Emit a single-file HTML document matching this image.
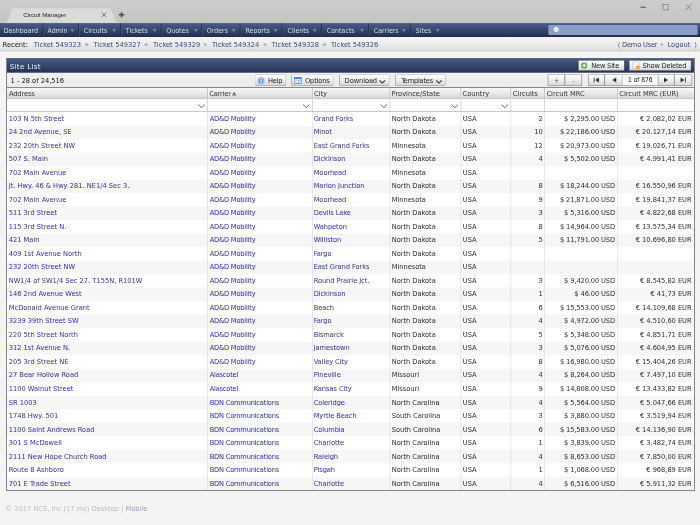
<!DOCTYPE html>
<html lang="en"><head><meta charset="utf-8"><title>Circuit Manager</title>
<style>
html,body{margin:0;padding:0}
body{width:700px;height:525px;overflow:hidden;background:#f3f3f3}
#root{position:absolute;left:0;top:0;width:1036.58px;height:777.43px;transform:scale(0.6753);transform-origin:0 0;
 font:11px "DejaVu Sans Condensed","DejaVu Sans","Liberation Sans",sans-serif;letter-spacing:0;color:#2a2a2a;background:#f4f4f4;overflow:hidden;filter:blur(0.55px)}
#root div,#root span,#root a{position:absolute;white-space:nowrap;box-sizing:border-box}
a{color:#2f2f9c;text-decoration:none}
.chrome{left:0;top:0;width:100%;height:34px;background:linear-gradient(#cdcdcd,#c5c5c4)}
.nav{left:0;top:34px;width:100%;height:21px;background:linear-gradient(#485a83 0%,#3a4b72 40%,#2a3a5e 75%,#1f2d4e 100%);border-top:1px solid #27365a}
.nav span.t{color:#d9deea;top:2.7px;line-height:14px;font-size:10.4px;letter-spacing:0}
.nav span.s{top:0;width:1px;height:100%;background:#1d2945;box-shadow:1px 0 0 #4a5c82}
.nav span.a{top:7.6px;width:0;height:0;border-left:3.2px solid transparent;border-right:3.2px solid transparent;border-top:5px solid #6f7fa2}
.search{left:811.94px;top:2.4px;width:220.94px;height:15px;background:#8b9fc6;border-radius:2px}
.rec{left:0;top:55px;width:100%;height:21px;background:linear-gradient(#f7f7f7,#ececec 50%,#dedede);border-bottom:1px solid #a9a9a9;box-shadow:0 1px 0 #fff}
.rec span,.rec a{top:4.4px;line-height:14px}
.rec a{color:#3a4a7c}
.rec .d{top:9.2px !important;width:4.2px;height:4.2px;border-radius:2.1px;background:#b3b3ba}
.panel{left:8.88px;top:86.33px;width:1020.29px;height:640.75px;background:#fff}
.bd{background:#787878}
.ph{left:8.88px;top:86.33px;width:1020.29px;height:21.47px;background:linear-gradient(#4a5b84,#36476d 50%,#243458);border:1px solid #223052}
.ph .title{left:4.4px;top:3.4px;font:10.7px/16px 'DejaVu Sans',sans-serif;color:#eef1f7;letter-spacing:0.42px}
.btn{border:1px solid #8e8e8e;border-top-color:#b2b2b2;border-radius:2px;background:linear-gradient(#ffffff,#f0f0f0 45%,#d8d8d8);color:#222;line-height:14px;height:16.6px}
.btn span{top:0.4px}
.tb .btn span{top:1.5px}
.tb{left:10.36px;top:107.8px;width:1017.33px;height:21.03px;background:linear-gradient(#f2f2f2,#ebebeb)}
.ch{left:10.36px;top:128.83px;width:1017.33px;height:18.22px;background:linear-gradient(#fafafa,#ececec 45%,#d6d6d6);border-bottom:1px solid #a0a0a0;color:#333}
.ch span.h{top:3.1px;line-height:14px}
.ch span.v{top:0;width:1px;height:100%;background:#b4b4b4;box-shadow:1px 0 0 #fbfbfb}
.fr{left:10.36px;top:147.05px;width:1017.33px;height:18.58px;background:#fff;border-bottom:1.3px solid #a2a2a2}
.fr span.v{top:0;width:1px;height:100%;background:#c4c4c4}
.fr svg{position:absolute;top:5px}
.rows{left:10.36px;top:165.63px;width:1017.33px;height:560.0px;background:#fff}
.r{left:0;width:100%;height:20.0px}
.r.o{background:#f6f6f6}
.r span,.r a{top:3.4px;line-height:14px}
.r .n{text-align:right}
.c1{letter-spacing:-0.3px}.c2{letter-spacing:-0.12px}.c3{letter-spacing:-0.07px}.c6{letter-spacing:-0.18px}.c7{letter-spacing:-0.05px}
.vl{top:0;width:1px;height:100%;background:#dcdcdc}
.foot{left:8.0px;top:746.94px;line-height:14px;color:#bcbcbc}
.foot a{position:static !important;color:#93a0cf}
</style></head>
<body><div id="root">
<div class="chrome">
<svg style="position:absolute;left:0;top:0" width="300" height="34" viewBox="0 0 300 34"><path d="M3 34 C10 33 11 31 13 25 L16 16 C17 13 19 12 22 12 L160 12 C163 12 165 13 166 16 L170 27 C171 31 173 33 179 34 Z" fill="#dbdbdb"/><path d="M3 33.5 C10 33 11 31 13 25 L16 16 C17 13 19 12 22 12 L160 12 C163 12 165 13 166 16 L170 27 C171 31 173 33 179 33.5" fill="none" stroke="#c4c4c4" stroke-width="0.6"/></svg>
<span style="left:34.5px;top:16.4px;font:9px 'Liberation Sans',sans-serif;letter-spacing:0;line-height:12px;color:#1e1e1e">Circuit Manager</span>
<svg style="position:absolute;left:149.45px;top:16.92px" width="10" height="10" viewBox="0 0 10 10"><path d="M1.5 1.5 L8.5 8.5 M8.5 1.5 L1.5 8.5" stroke="#5a5a5a" stroke-width="1.2" fill="none"/></svg>
<svg style="position:absolute;left:175.36px;top:16.92px" width="10" height="10" viewBox="0 0 10 10"><path d="M5 1 V9 M1 5 H9" stroke="#484848" stroke-width="2.2" fill="none"/></svg>
<svg style="position:absolute;left:941.8px;top:1.8px" width="94.77" height="16" viewBox="0 0 94.77 16"><path d="M6.5 8.8 H14.5" stroke="#555" stroke-width="1.6"/><g stroke="#4e4e4e" stroke-width="1.1" fill="none"><rect x="39.83" y="4.6" width="8" height="8" stroke-dasharray="2 1.4"/><path d="M73.75 4.6 l8 8 m0 -8 l-8 8" stroke-dasharray="2.2 1.2"/></g></svg>
</div>
<div class="nav">
<span class="t" style="left:5.55px">Dashboard</span>
<span class="s" style="left:62.92px"></span>
<span class="t" style="left:70.34px">Admin</span>
<span class="a" style="left:104.06px"></span>
<span class="s" style="left:116.23px"></span>
<span class="t" style="left:124.09px">Circuits</span>
<span class="a" style="left:165.52px"></span>
<span class="s" style="left:177.98000000000002px"></span>
<span class="t" style="left:186.29px">Tickets</span>
<span class="a" style="left:225.79px"></span>
<span class="s" style="left:237.95000000000002px"></span>
<span class="t" style="left:246.26px">Quotes</span>
<span class="a" style="left:286.5px"></span>
<span class="s" style="left:297.93px"></span>
<span class="t" style="left:306.23px">Orders</span>
<span class="a" style="left:343.22px"></span>
<span class="s" style="left:355.38px"></span>
<span class="t" style="left:363.54px">Reports</span>
<span class="a" style="left:404.97px"></span>
<span class="s" style="left:417.13px"></span>
<span class="t" style="left:425.74px">Clients</span>
<span class="a" style="left:463.46px"></span>
<span class="s" style="left:475.33px"></span>
<span class="t" style="left:483.93px">Contacts</span>
<span class="a" style="left:532.76px"></span>
<span class="s" style="left:544.93px"></span>
<span class="t" style="left:553.53px">Carriers</span>
<span class="a" style="left:594.51px"></span>
<span class="s" style="left:607.12px"></span>
<span class="t" style="left:615.73px">Sites</span>
<span class="a" style="left:644.56px"></span>
<div class="search"><svg style="position:absolute;left:7px;top:1.4px" width="12.6" height="11.7" viewBox="0 0 14 13"><circle cx="5.2" cy="5.2" r="3.6" fill="#dfe9f8" stroke="#f4f7fc" stroke-width="1.4"/><path d="M8 8 L11.5 11.5" stroke="#c9a77a" stroke-width="2" stroke-linecap="round"/></svg></div>
</div>
<div class="rec">
<span style="left:3.85px;color:#222">Recent:</span>
<a style="left:49.98px">Ticket 549323</a>
<a style="left:138.46px">Ticket 549327</a>
<a style="left:226.57px">Ticket 549329</a>
<a style="left:313.93px">Ticket 549324</a>
<a style="left:402.41px">Ticket 549328</a>
<a style="left:490.15px">Ticket 549326</a>
<span class="d" style="left:126.36000000000001px"></span>
<span class="d" style="left:214.47px"></span>
<span class="d" style="left:302.21px"></span>
<span class="d" style="left:390.32px"></span>
<span class="d" style="left:478.42999999999995px"></span>
<span style="left:914.85px;color:#666">(</span><a style="left:921.07px;letter-spacing:-0.3px">Demo User</a><span class="d" style="left:978.2099999999999px"></span><a style="left:988.45px">Logout</a><span style="left:1028.14px;color:#666">)</span>
</div>
<div class="panel"></div>
<svg style="position:absolute;left:0;top:0;z-index:5;pointer-events:none" width="1036.58" height="777.43" viewBox="0 0 1036.58 777.43"><rect x="8.88" y="86.33" width="1.48" height="640.75" fill="#848484"/><rect x="1027.69" y="86.33" width="1.48" height="640.75" fill="#848484"/><rect x="8.88" y="725.6" width="1020.29" height="1.48" fill="#848484"/><rect x="8.88" y="128.83" width="1020.29" height="1.48" fill="#888888"/></svg>
<div class="ph"><span class="title">Site List</span>
<div class="btn" style="left:846.04px;top:1.3px;width:69.59px"><svg style="position:absolute;left:3.4px;top:2.6px" width="10" height="10" viewBox="0 0 12 12"><circle cx="6" cy="6" r="5.3" fill="#5cb848" stroke="#3f9a30" stroke-width="0.8"/><path d="M6 2.8 V9.2 M2.8 6 H9.2" stroke="#fff" stroke-width="2.2"/></svg><span style="left:18.6px;letter-spacing:-0.3px">New Site</span></div>
<div class="btn" style="left:921.41px;top:1.3px;width:93.0px"><svg style="position:absolute;left:3.6px;top:1.6px" width="12" height="12" viewBox="0 0 13 13"><path d="M1.5 0.7 H8 L10.5 3.2 V12 H1.5 Z" fill="#fff" stroke="#9aa0a8" stroke-width="0.9"/><circle cx="9.3" cy="9.6" r="3" fill="#f0862a"/><path d="M7.8 9.6 H10.8" stroke="#fff" stroke-width="1.1"/></svg><span style="left:19.2px;letter-spacing:-0.32px">Show Deleted</span></div>
</div>
<div class="tb">
<span style="left:5.34px;top:5px;line-height:14px;color:#111">1 - 28 of 24,516</span>
<div class="btn" style="left:366.21px;top:2.7px;width:47.69px"><svg style="position:absolute;left:3.4px;top:2.2px" width="11.4" height="11.4" viewBox="0 0 12 12"><circle cx="6" cy="6" r="5.5" fill="#a6c3ee" stroke="#8fb0e4" stroke-width="0.7"/><circle cx="6" cy="6" r="3.3" fill="#5b87d3"/><circle cx="6" cy="5.2" r="1.5" fill="#e8f0fc"/><rect x="5.3" y="5.5" width="1.4" height="3.4" fill="#e8f0fc"/></svg><span style="left:19.4px;letter-spacing:-0.4px">Help</span></div>
<div class="btn" style="left:420.86px;top:2.7px;width:63.23px"><svg style="position:absolute;left:2.6px;top:2.6px" width="12" height="10.6" viewBox="0 0 13 11"><rect x="0.6" y="0.6" width="11.8" height="9.8" fill="#f4f8fe" stroke="#4a7bd0" stroke-width="1.2"/><rect x="0.6" y="0.6" width="11.8" height="2.6" fill="#4a7bd0"/><rect x="1.6" y="4" width="3.2" height="5.6" fill="#c9d9f2"/><path d="M6 5.4 H11 M6 7.8 H11" stroke="#6f98dc" stroke-width="1.1"/></svg><span style="left:19.4px;letter-spacing:-0.25px">Options</span></div>
<div class="btn" style="left:491.94px;top:2.7px;width:74.48px"><span style="left:7px;letter-spacing:-0.15px">Download</span><svg style="position:absolute;right:4.6px;top:6.8px" width="10" height="6.6" viewBox="0 0 9 6"><path d="M0.8 0.8 L4.5 4.6 L8.2 0.8" fill="none" stroke="#2a2a2a" stroke-width="1.4"/></svg></div>
<div class="btn" style="left:574.71px;top:2.7px;width:75.38px"><span style="left:8px;letter-spacing:-0.35px">Templates</span><svg style="position:absolute;right:4.6px;top:6.8px" width="10" height="6.6" viewBox="0 0 9 6"><path d="M0.8 0.8 L4.5 4.6 L8.2 0.8" fill="none" stroke="#2a2a2a" stroke-width="1.4"/></svg></div>
<div class="btn" style="left:800.98px;top:2.7px;width:25.73px;border-radius:0;"><span style="left:0;width:100%;text-align:center;color:#555;font-size:10px">+</span></div>
<div class="btn" style="left:825.71px;top:2.7px;width:26.32px;border-radius:0;"><span style="left:0;width:100%;text-align:center;color:#555;font-size:10px">-</span></div>
<div class="btn" style="left:860.81px;top:2.7px;width:25.28px;border-radius:0;"><svg style="position:absolute;left:50%;top:50%;margin:-5.2px 0 0 -5.4px" width="10.8" height="9" viewBox="0 0 12 10"><path d="M2 1 V9" stroke="#333" stroke-width="1.4"/><path d="M10 1 L3.6 5 L10 9 Z" fill="#333"/></svg></div>
<div class="btn" style="left:885.09px;top:2.7px;width:26.92px;border-radius:0;"><svg style="position:absolute;left:50%;top:50%;margin:-5.2px 0 0 -5.4px" width="10.8" height="9" viewBox="0 0 12 10"><path d="M9.5 1 L2.8 5 L9.5 9 Z" fill="#333"/></svg></div>
<div style="left:912.01px;top:2.7px;width:51.72px;height:16.6px;background:#fff;border-top:1px solid #b2b2b2;border-bottom:1px solid #8e8e8e;text-align:center;line-height:15.6px;font-size:10px;letter-spacing:-0.1px;color:#111">1 of 876</div>
<div class="btn" style="left:963.73px;top:2.7px;width:25.13px;border-radius:0;"><svg style="position:absolute;left:50%;top:50%;margin:-5.2px 0 0 -5.4px" width="10.8" height="9" viewBox="0 0 12 10"><path d="M2.5 1 L9.2 5 L2.5 9 Z" fill="#333"/></svg></div>
<div class="btn" style="left:987.86px;top:2.7px;width:26.47px;border-radius:0;"><svg style="position:absolute;left:50%;top:50%;margin:-5.2px 0 0 -5.4px" width="10.8" height="9" viewBox="0 0 12 10"><path d="M10 1 V9" stroke="#333" stroke-width="1.4"/><path d="M2 1 L8.4 5 L2 9 Z" fill="#333"/></svg></div>
</div>
<div class="ch">
<span class="h" style="left:2.92px;letter-spacing:-0.2px">Address</span>
<span class="h" style="left:299.67px;letter-spacing:-0.3px">Carrier<svg style="position:relative;margin-left:1.6px;top:0.4px" width="7.6" height="7" viewBox="0 0 7 7"><path d="M0.2 6.6 L3.5 0.4 L6.8 6.6 Z" fill="#707070"/></svg></span>
<span class="v" style="left:296.47px"></span>
<span class="h" style="left:454.56px;letter-spacing:0">City</span>
<span class="v" style="left:451.36px"></span>
<span class="h" style="left:569.47px;letter-spacing:0">Province/State</span>
<span class="v" style="left:566.27px"></span>
<span class="h" style="left:674.61px;letter-spacing:0">Country</span>
<span class="v" style="left:671.41px"></span>
<span class="h" style="left:749.1px;letter-spacing:0">Circuits</span>
<span class="v" style="left:745.9px"></span>
<span class="h" style="left:798.85px;letter-spacing:0">Circuit MRC</span>
<span class="v" style="left:795.65px"></span>
<span class="h" style="left:906.66px;letter-spacing:0">Circuit MRC (EUR)</span>
<span class="v" style="left:903.46px"></span>
</div>
<div class="fr">
<svg style="left:282.67px;top:6.6px" width="11" height="7" viewBox="0 0 11 7"><path d="M0.8 0.8 L5.5 5.4 L10.2 0.8" fill="none" stroke="#4a4a4a" stroke-width="1.3"/></svg>
<span class="v" style="left:296.47px"></span>
<svg style="left:437.56px;top:6.6px" width="11" height="7" viewBox="0 0 11 7"><path d="M0.8 0.8 L5.5 5.4 L10.2 0.8" fill="none" stroke="#4a4a4a" stroke-width="1.3"/></svg>
<span class="v" style="left:451.36px"></span>
<svg style="left:552.47px;top:6.6px" width="11" height="7" viewBox="0 0 11 7"><path d="M0.8 0.8 L5.5 5.4 L10.2 0.8" fill="none" stroke="#4a4a4a" stroke-width="1.3"/></svg>
<span class="v" style="left:566.27px"></span>
<svg style="left:657.61px;top:6.6px" width="11" height="7" viewBox="0 0 11 7"><path d="M0.8 0.8 L5.5 5.4 L10.2 0.8" fill="none" stroke="#4a4a4a" stroke-width="1.3"/></svg>
<span class="v" style="left:671.41px"></span>
<svg style="left:732.1px;top:6.6px" width="11" height="7" viewBox="0 0 11 7"><path d="M0.8 0.8 L5.5 5.4 L10.2 0.8" fill="none" stroke="#4a4a4a" stroke-width="1.3"/></svg>
<span class="v" style="left:745.9px"></span>
<span class="v" style="left:795.65px"></span>
<span class="v" style="left:903.46px"></span>
</div>
<div class="rows">
<div class="r" style="top:0.0px"><a style="left:2.52px">103 N 5th Street</a><a class="c1" style="left:300.07px">AD&amp;D Mobility</a><a class="c2" style="left:454.16px">Grand Forks</a><span class="c3" style="left:569.87px">North Dakota</span><span style="left:675.01px">USA</span><span class="n" style="right:223.88px">2</span><span class="n c6" style="right:117.07px">$ 2,295.00 USD</span><span class="n c7" style="right:3.6px">€ 2.082,02 EUR</span></div>
<div class="r o" style="top:20.0px"><a style="left:2.52px">24 2nd Avenue, SE</a><a class="c1" style="left:300.07px">AD&amp;D Mobility</a><a class="c2" style="left:454.16px">Minot</a><span class="c3" style="left:569.87px">North Dakota</span><span style="left:675.01px">USA</span><span class="n" style="right:223.88px">10</span><span class="n c6" style="right:117.07px">$ 22,186.00 USD</span><span class="n c7" style="right:3.6px">€ 20.127,14 EUR</span></div>
<div class="r" style="top:40.0px"><a style="left:2.52px">232 20th Street NW</a><a class="c1" style="left:300.07px">AD&amp;D Mobility</a><a class="c2" style="left:454.16px">East Grand Forks</a><span class="c3" style="left:569.87px">Minnesota</span><span style="left:675.01px">USA</span><span class="n" style="right:223.88px">12</span><span class="n c6" style="right:117.07px">$ 20,973.00 USD</span><span class="n c7" style="right:3.6px">€ 19.026,71 EUR</span></div>
<div class="r o" style="top:60.0px"><a style="left:2.52px">507 S. Main</a><a class="c1" style="left:300.07px">AD&amp;D Mobility</a><a class="c2" style="left:454.16px">Dickinson</a><span class="c3" style="left:569.87px">North Dakota</span><span style="left:675.01px">USA</span><span class="n" style="right:223.88px">4</span><span class="n c6" style="right:117.07px">$ 5,502.00 USD</span><span class="n c7" style="right:3.6px">€ 4.991,41 EUR</span></div>
<div class="r" style="top:80.0px"><a style="left:2.52px">702 Main Avenue</a><a class="c1" style="left:300.07px">AD&amp;D Mobility</a><a class="c2" style="left:454.16px">Moorhead</a><span class="c3" style="left:569.87px">Minnesota</span><span style="left:675.01px">USA</span></div>
<div class="r o" style="top:100.0px"><a style="left:2.52px">Jt. Hwy. 46 &amp; Hwy 281. NE1/4 Sec 3.</a><a class="c1" style="left:300.07px">AD&amp;D Mobility</a><a class="c2" style="left:454.16px">Marion Junction</a><span class="c3" style="left:569.87px">North Dakota</span><span style="left:675.01px">USA</span><span class="n" style="right:223.88px">8</span><span class="n c6" style="right:117.07px">$ 18,244.00 USD</span><span class="n c7" style="right:3.6px">€ 16.550,96 EUR</span></div>
<div class="r" style="top:120.0px"><a style="left:2.52px">702 Main Avenue</a><a class="c1" style="left:300.07px">AD&amp;D Mobility</a><a class="c2" style="left:454.16px">Moorhead</a><span class="c3" style="left:569.87px">Minnesota</span><span style="left:675.01px">USA</span><span class="n" style="right:223.88px">9</span><span class="n c6" style="right:117.07px">$ 21,871.00 USD</span><span class="n c7" style="right:3.6px">€ 19.841,37 EUR</span></div>
<div class="r o" style="top:140.0px"><a style="left:2.52px">511 3rd Street</a><a class="c1" style="left:300.07px">AD&amp;D Mobility</a><a class="c2" style="left:454.16px">Devils Lake</a><span class="c3" style="left:569.87px">North Dakota</span><span style="left:675.01px">USA</span><span class="n" style="right:223.88px">3</span><span class="n c6" style="right:117.07px">$ 5,316.00 USD</span><span class="n c7" style="right:3.6px">€ 4.822,68 EUR</span></div>
<div class="r" style="top:160.0px"><a style="left:2.52px">115 3rd Street N.</a><a class="c1" style="left:300.07px">AD&amp;D Mobility</a><a class="c2" style="left:454.16px">Wahpeton</a><span class="c3" style="left:569.87px">North Dakota</span><span style="left:675.01px">USA</span><span class="n" style="right:223.88px">8</span><span class="n c6" style="right:117.07px">$ 14,964.00 USD</span><span class="n c7" style="right:3.6px">€ 13.575,34 EUR</span></div>
<div class="r o" style="top:180.0px"><a style="left:2.52px">421 Main</a><a class="c1" style="left:300.07px">AD&amp;D Mobility</a><a class="c2" style="left:454.16px">Williston</a><span class="c3" style="left:569.87px">North Dakota</span><span style="left:675.01px">USA</span><span class="n" style="right:223.88px">5</span><span class="n c6" style="right:117.07px">$ 11,791.00 USD</span><span class="n c7" style="right:3.6px">€ 10.696,80 EUR</span></div>
<div class="r" style="top:200.0px"><a style="left:2.52px">409 1st Avenue North</a><a class="c1" style="left:300.07px">AD&amp;D Mobility</a><a class="c2" style="left:454.16px">Fargo</a><span class="c3" style="left:569.87px">North Dakota</span><span style="left:675.01px">USA</span></div>
<div class="r o" style="top:220.0px"><a style="left:2.52px">232 20th Street NW</a><a class="c1" style="left:300.07px">AD&amp;D Mobility</a><a class="c2" style="left:454.16px">East Grand Forks</a><span class="c3" style="left:569.87px">Minnesota</span><span style="left:675.01px">USA</span></div>
<div class="r" style="top:240.0px"><a style="left:2.52px">NW1/4 of SW1/4 Sec 27. T155N, R101W</a><a class="c1" style="left:300.07px">AD&amp;D Mobility</a><a class="c2" style="left:454.16px">Round Prairie Jct.</a><span class="c3" style="left:569.87px">North Dakota</span><span style="left:675.01px">USA</span><span class="n" style="right:223.88px">3</span><span class="n c6" style="right:117.07px">$ 9,420.00 USD</span><span class="n c7" style="right:3.6px">€ 8.545,82 EUR</span></div>
<div class="r o" style="top:260.0px"><a style="left:2.52px">146 2nd Avenue West</a><a class="c1" style="left:300.07px">AD&amp;D Mobility</a><a class="c2" style="left:454.16px">Dickinson</a><span class="c3" style="left:569.87px">North Dakota</span><span style="left:675.01px">USA</span><span class="n" style="right:223.88px">1</span><span class="n c6" style="right:117.07px">$ 46.00 USD</span><span class="n c7" style="right:3.6px">€ 41,73 EUR</span></div>
<div class="r" style="top:280.0px"><a style="left:2.52px">McDonald Avenue Grant</a><a class="c1" style="left:300.07px">AD&amp;D Mobility</a><a class="c2" style="left:454.16px">Beach</a><span class="c3" style="left:569.87px">North Dakota</span><span style="left:675.01px">USA</span><span class="n" style="right:223.88px">6</span><span class="n c6" style="right:117.07px">$ 15,553.00 USD</span><span class="n c7" style="right:3.6px">€ 14.109,68 EUR</span></div>
<div class="r o" style="top:300.0px"><a style="left:2.52px">3239 39th Street SW</a><a class="c1" style="left:300.07px">AD&amp;D Mobility</a><a class="c2" style="left:454.16px">Fargo</a><span class="c3" style="left:569.87px">North Dakota</span><span style="left:675.01px">USA</span><span class="n" style="right:223.88px">4</span><span class="n c6" style="right:117.07px">$ 4,972.00 USD</span><span class="n c7" style="right:3.6px">€ 4.510,60 EUR</span></div>
<div class="r" style="top:320.0px"><a style="left:2.52px">220 5th Street North</a><a class="c1" style="left:300.07px">AD&amp;D Mobility</a><a class="c2" style="left:454.16px">Bismarck</a><span class="c3" style="left:569.87px">North Dakota</span><span style="left:675.01px">USA</span><span class="n" style="right:223.88px">5</span><span class="n c6" style="right:117.07px">$ 5,348.00 USD</span><span class="n c7" style="right:3.6px">€ 4.851,71 EUR</span></div>
<div class="r o" style="top:340.0px"><a style="left:2.52px">312 1st Avenue N.</a><a class="c1" style="left:300.07px">AD&amp;D Mobility</a><a class="c2" style="left:454.16px">Jamestown</a><span class="c3" style="left:569.87px">North Dakota</span><span style="left:675.01px">USA</span><span class="n" style="right:223.88px">3</span><span class="n c6" style="right:117.07px">$ 5,076.00 USD</span><span class="n c7" style="right:3.6px">€ 4.604,95 EUR</span></div>
<div class="r" style="top:360.0px"><a style="left:2.52px">205 3rd Street NE</a><a class="c1" style="left:300.07px">AD&amp;D Mobility</a><a class="c2" style="left:454.16px">Valley City</a><span class="c3" style="left:569.87px">North Dakota</span><span style="left:675.01px">USA</span><span class="n" style="right:223.88px">8</span><span class="n c6" style="right:117.07px">$ 16,980.00 USD</span><span class="n c7" style="right:3.6px">€ 15.404,26 EUR</span></div>
<div class="r o" style="top:380.0px"><a style="left:2.52px">27 Bear Hollow Road</a><a class="c1" style="left:300.07px">Alascotel</a><a class="c2" style="left:454.16px">Pineville</a><span class="c3" style="left:569.87px">Missouri</span><span style="left:675.01px">USA</span><span class="n" style="right:223.88px">4</span><span class="n c6" style="right:117.07px">$ 8,264.00 USD</span><span class="n c7" style="right:3.6px">€ 7.497,10 EUR</span></div>
<div class="r" style="top:400.0px"><a style="left:2.52px">1100 Walnut Street</a><a class="c1" style="left:300.07px">Alascotel</a><a class="c2" style="left:454.16px">Kansas City</a><span class="c3" style="left:569.87px">Missouri</span><span style="left:675.01px">USA</span><span class="n" style="right:223.88px">9</span><span class="n c6" style="right:117.07px">$ 14,808.00 USD</span><span class="n c7" style="right:3.6px">€ 13.433,82 EUR</span></div>
<div class="r o" style="top:420.0px"><a style="left:2.52px">SR 1003</a><a class="c1" style="left:300.07px">BDN Communications</a><a class="c2" style="left:454.16px">Coleridge</a><span class="c3" style="left:569.87px">North Carolina</span><span style="left:675.01px">USA</span><span class="n" style="right:223.88px">4</span><span class="n c6" style="right:117.07px">$ 5,564.00 USD</span><span class="n c7" style="right:3.6px">€ 5.047,66 EUR</span></div>
<div class="r" style="top:440.0px"><a style="left:2.52px">1748 Hwy. 501</a><a class="c1" style="left:300.07px">BDN Communications</a><a class="c2" style="left:454.16px">Myrtle Beach</a><span class="c3" style="left:569.87px">South Carolina</span><span style="left:675.01px">USA</span><span class="n" style="right:223.88px">3</span><span class="n c6" style="right:117.07px">$ 3,880.00 USD</span><span class="n c7" style="right:3.6px">€ 3.519,94 EUR</span></div>
<div class="r o" style="top:460.0px"><a style="left:2.52px">1100 Saint Andrews Road</a><a class="c1" style="left:300.07px">BDN Communications</a><a class="c2" style="left:454.16px">Columbia</a><span class="c3" style="left:569.87px">South Carolina</span><span style="left:675.01px">USA</span><span class="n" style="right:223.88px">6</span><span class="n c6" style="right:117.07px">$ 15,583.00 USD</span><span class="n c7" style="right:3.6px">€ 14.136,90 EUR</span></div>
<div class="r" style="top:480.0px"><a style="left:2.52px">301 S McDowell</a><a class="c1" style="left:300.07px">BDN Communications</a><a class="c2" style="left:454.16px">Charlotte</a><span class="c3" style="left:569.87px">North Carolina</span><span style="left:675.01px">USA</span><span class="n" style="right:223.88px">1</span><span class="n c6" style="right:117.07px">$ 3,839.00 USD</span><span class="n c7" style="right:3.6px">€ 3.482,74 EUR</span></div>
<div class="r o" style="top:500.0px"><a style="left:2.52px">2111 New Hope Church Road</a><a class="c1" style="left:300.07px">BDN Communications</a><a class="c2" style="left:454.16px">Raleigh</a><span class="c3" style="left:569.87px">North Carolina</span><span style="left:675.01px">USA</span><span class="n" style="right:223.88px">4</span><span class="n c6" style="right:117.07px">$ 8,653.00 USD</span><span class="n c7" style="right:3.6px">€ 7.850,00 EUR</span></div>
<div class="r" style="top:520.0px"><a style="left:2.52px">Route 8 Ashboro</a><a class="c1" style="left:300.07px">BDN Communications</a><a class="c2" style="left:454.16px">Pisgah</a><span class="c3" style="left:569.87px">North Carolina</span><span style="left:675.01px">USA</span><span class="n" style="right:223.88px">1</span><span class="n c6" style="right:117.07px">$ 1,068.00 USD</span><span class="n c7" style="right:3.6px">€ 968,89 EUR</span></div>
<div class="r o" style="top:540.0px"><a style="left:2.52px">701 E Trade Street</a><a class="c1" style="left:300.07px">BDN Communications</a><a class="c2" style="left:454.16px">Charlotte</a><span class="c3" style="left:569.87px">North Carolina</span><span style="left:675.01px">USA</span><span class="n" style="right:223.88px">4</span><span class="n c6" style="right:117.07px">$ 6,516.00 USD</span><span class="n c7" style="right:3.6px">€ 5.911,32 EUR</span></div>
<span class="vl" style="left:296.47px"></span>
<span class="vl" style="left:451.36px"></span>
<span class="vl" style="left:566.27px"></span>
<span class="vl" style="left:671.41px"></span>
<span class="vl" style="left:745.9px"></span>
<span class="vl" style="left:795.65px"></span>
<span class="vl" style="left:903.46px"></span>
</div>
<div class="foot">© 2017 NCS, Inc (17 ms) Desktop | <a>Mobile</a></div>
</div></body></html>
